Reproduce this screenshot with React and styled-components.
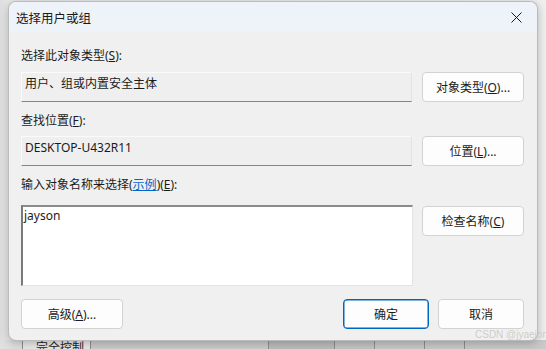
import React from "react";
import styled, { createGlobalStyle } from "styled-components";

const Global = createGlobalStyle`
  html, body { margin: 0; padding: 0; }
  body {
    width: 546px; height: 349px; overflow: hidden;
    font-family: "Noto Sans", "Noto Sans CJK SC", sans-serif;
    font-size: 12px; color: #1b1b1b;
  }
`;

const Desk = styled.div`
  position: relative;
  width: 546px;
  height: 349px;
  background: #ececec;
  overflow: hidden;
`;

const BackWindow = styled.div`
  position: absolute;
  left: 0; top: 0; right: 0; bottom: 0;
  background: linear-gradient(to right, #dedede 0, #e9e9e9 8px, #f0f0f0 100%);
`;

const BackStrip = styled.div`
  position: absolute;
  left: 0; right: 0; bottom: 0;
  height: 9px;
  background: #c9c9c9;
  display: flex;
  align-items: flex-start;
`;

const BackCell = styled.div`
  height: 100%;
  width: ${p => p.$w}px;
  flex: none;
  border-right: 1px solid #8e8e8e;
  background: ${p => p.$bg || "transparent"};
  font-family: "Noto Sans CJK SC", sans-serif;
  font-size: 12px;
  line-height: 14px;
  color: #222;
  overflow: hidden;
  white-space: nowrap;
  padding-left: ${p => p.$pl || 0}px;
  box-sizing: border-box;
`;

const Dialog = styled.div`
  position: absolute;
  left: 8px;
  top: 1px;
  width: 530px;
  height: 340px;
  box-sizing: border-box;
  background: #f0f0f0;
  border: 1px solid rgba(0, 0, 0, 0.22);
  border-radius: 8px;
  box-shadow: 0 2px 10px rgba(0, 0, 0, 0.25);
  overflow: hidden;
  display: flex;
  flex-direction: column;
`;

const TitleBar = styled.div`
  height: 30px;
  flex: none;
  background: #eef2f9;
  display: flex;
  align-items: center;
  justify-content: space-between;
  padding: 0 11px 0 7px;
`;

const Title = styled.span`
  font-family: "Noto Sans CJK SC", sans-serif;
  font-size: 12.5px;
  color: #1a1a1a;
`;

const Close = styled.span`
  display: flex;
  width: 20px;
  height: 20px;
  align-items: center;
  justify-content: center;
`;

const Body = styled.div`
  flex: 1;
  padding: 15px 13px 0 12px;
  display: flex;
  flex-direction: column;
`;

const Label = styled.div`
  height: 17px;
  line-height: 17px;
  font-size: 12px;
  margin-bottom: ${p => p.$mb}px;
  white-space: nowrap;
`;

const Row = styled.div`
  display: flex;
  gap: 10px;
  align-items: flex-start;
  margin-bottom: ${p => p.$mb || 0}px;
`;

const Inset = styled.div`
  width: 391px;
  height: 30px;
  box-sizing: border-box;
  background: #efefef;
  border: 1px solid #e2e2e2;
  border-top-color: #fafafa;
  border-left-color: #fafafa;
  border-bottom: 1px solid #858585;
  padding: 3px 0 0 3px;
  font-size: 12px;
  line-height: 16px;
`;

const TextArea = styled.div`
  width: 392px;
  height: 81px;
  box-sizing: border-box;
  background: #ffffff;
  border-top: 2px solid #8a8a8a;
  border-left: 2px solid #7a7a7a;
  border-right: 1px solid #e3e3e3;
  border-bottom: 1px solid #e3e3e3;
  padding: 1px 0 0 1px;
  font-size: 12px;
  line-height: 16px;
`;

const Button = styled.button`
  width: ${p => p.$w || 102}px;
  height: ${p => p.$h || 30}px;
  flex: none;
  box-sizing: border-box;
  background: #fdfdfd;
  border: 1px solid ${p => (p.$primary ? "#0067c0" : "#d2d2d2")};
  box-shadow: ${p => (p.$primary ? "inset 0 0 0 0.5px #0067c0" : "none")};
  border-radius: 4px;
  font-family: "Noto Sans", "Noto Sans CJK SC", sans-serif;
  font-size: 12px;
  color: #1b1b1b;
  padding: 0;
  margin-top: ${p => p.$mt || 0}px;
  margin-left: ${p => p.$ml || 0}px;
  display: flex;
  align-items: center;
  justify-content: center;
`;

const Footer = styled.div`
  display: flex;
  align-items: center;
  margin-top: 13px;
`;

const Spacer = styled.div`
  flex: 1;
`;

const Link = styled.span`
  color: #0066cc;
  text-decoration: underline;
`;

const Watermark = styled.div`
  position: absolute;
  left: 475px;
  top: 329px;
  font-family: "Liberation Sans", sans-serif;
  font-size: 10px;
  color: rgba(200, 200, 200, 0.9);
  white-space: nowrap;
`;

export default function App() {
  return (
    <>
      <Global />
      <Desk>
        <BackWindow />
        <BackStrip>
          <BackCell $w={23} $bg="#e0e0e0" />
          <BackCell $w={68} $bg="#e8e8e8" $pl={13}>完全控制</BackCell>
          <BackCell $w={178} $bg="#cacaca" />
          <BackCell $w={66} $bg="#bdbdbd" />
          <BackCell $w={40} $bg="#c4c4c4" />
          <BackCell $w={50} $bg="#c8c8c8" />
          <BackCell $w={40} $bg="#c9c9c9" />
        </BackStrip>
        <Dialog>
          <TitleBar>
            <Title>选择用户或组</Title>
            <Close>
              <svg width="11" height="11" viewBox="0 0 11 11">
                <path d="M0.5 0.5 L10.5 10.5 M10.5 0.5 L0.5 10.5" stroke="#1a1a1a" strokeWidth="1" />
              </svg>
            </Close>
          </TitleBar>
          <Body>
            <Label $mb={8}>选择此对象类型(<u>S</u>):</Label>
            <Row $mb={10}>
              <Inset>用户、组或内置安全主体</Inset>
              <Button>对象类型(<u>O</u>)...</Button>
            </Row>
            <Label $mb={7}>查找位置(<u>F</u>):</Label>
            <Row $mb={10}>
              <Inset>DESKTOP-U432R11</Inset>
              <Button>位置(<u>L</u>)...</Button>
            </Row>
            <Label $mb={12}>
              输入对象名称来选择(<Link>示例</Link>)(<u>E</u>):
            </Label>
            <Row>
              <TextArea>jayson</TextArea>
              <Button $h={30} $mt={1} $ml={-1}>检查名称(<u>C</u>)</Button>
            </Row>
            <Footer>
              <Button $h={30}>高级(<u>A</u>)...</Button>
              <Spacer />
              <Button $w={86} $h={30} $primary>确定</Button>
              <Button $w={86} $h={30} $ml={9}>取消</Button>
            </Footer>
          </Body>
        </Dialog>
        <Watermark>CSDN @jyaejor</Watermark>
      </Desk>
    </>
  );
}
